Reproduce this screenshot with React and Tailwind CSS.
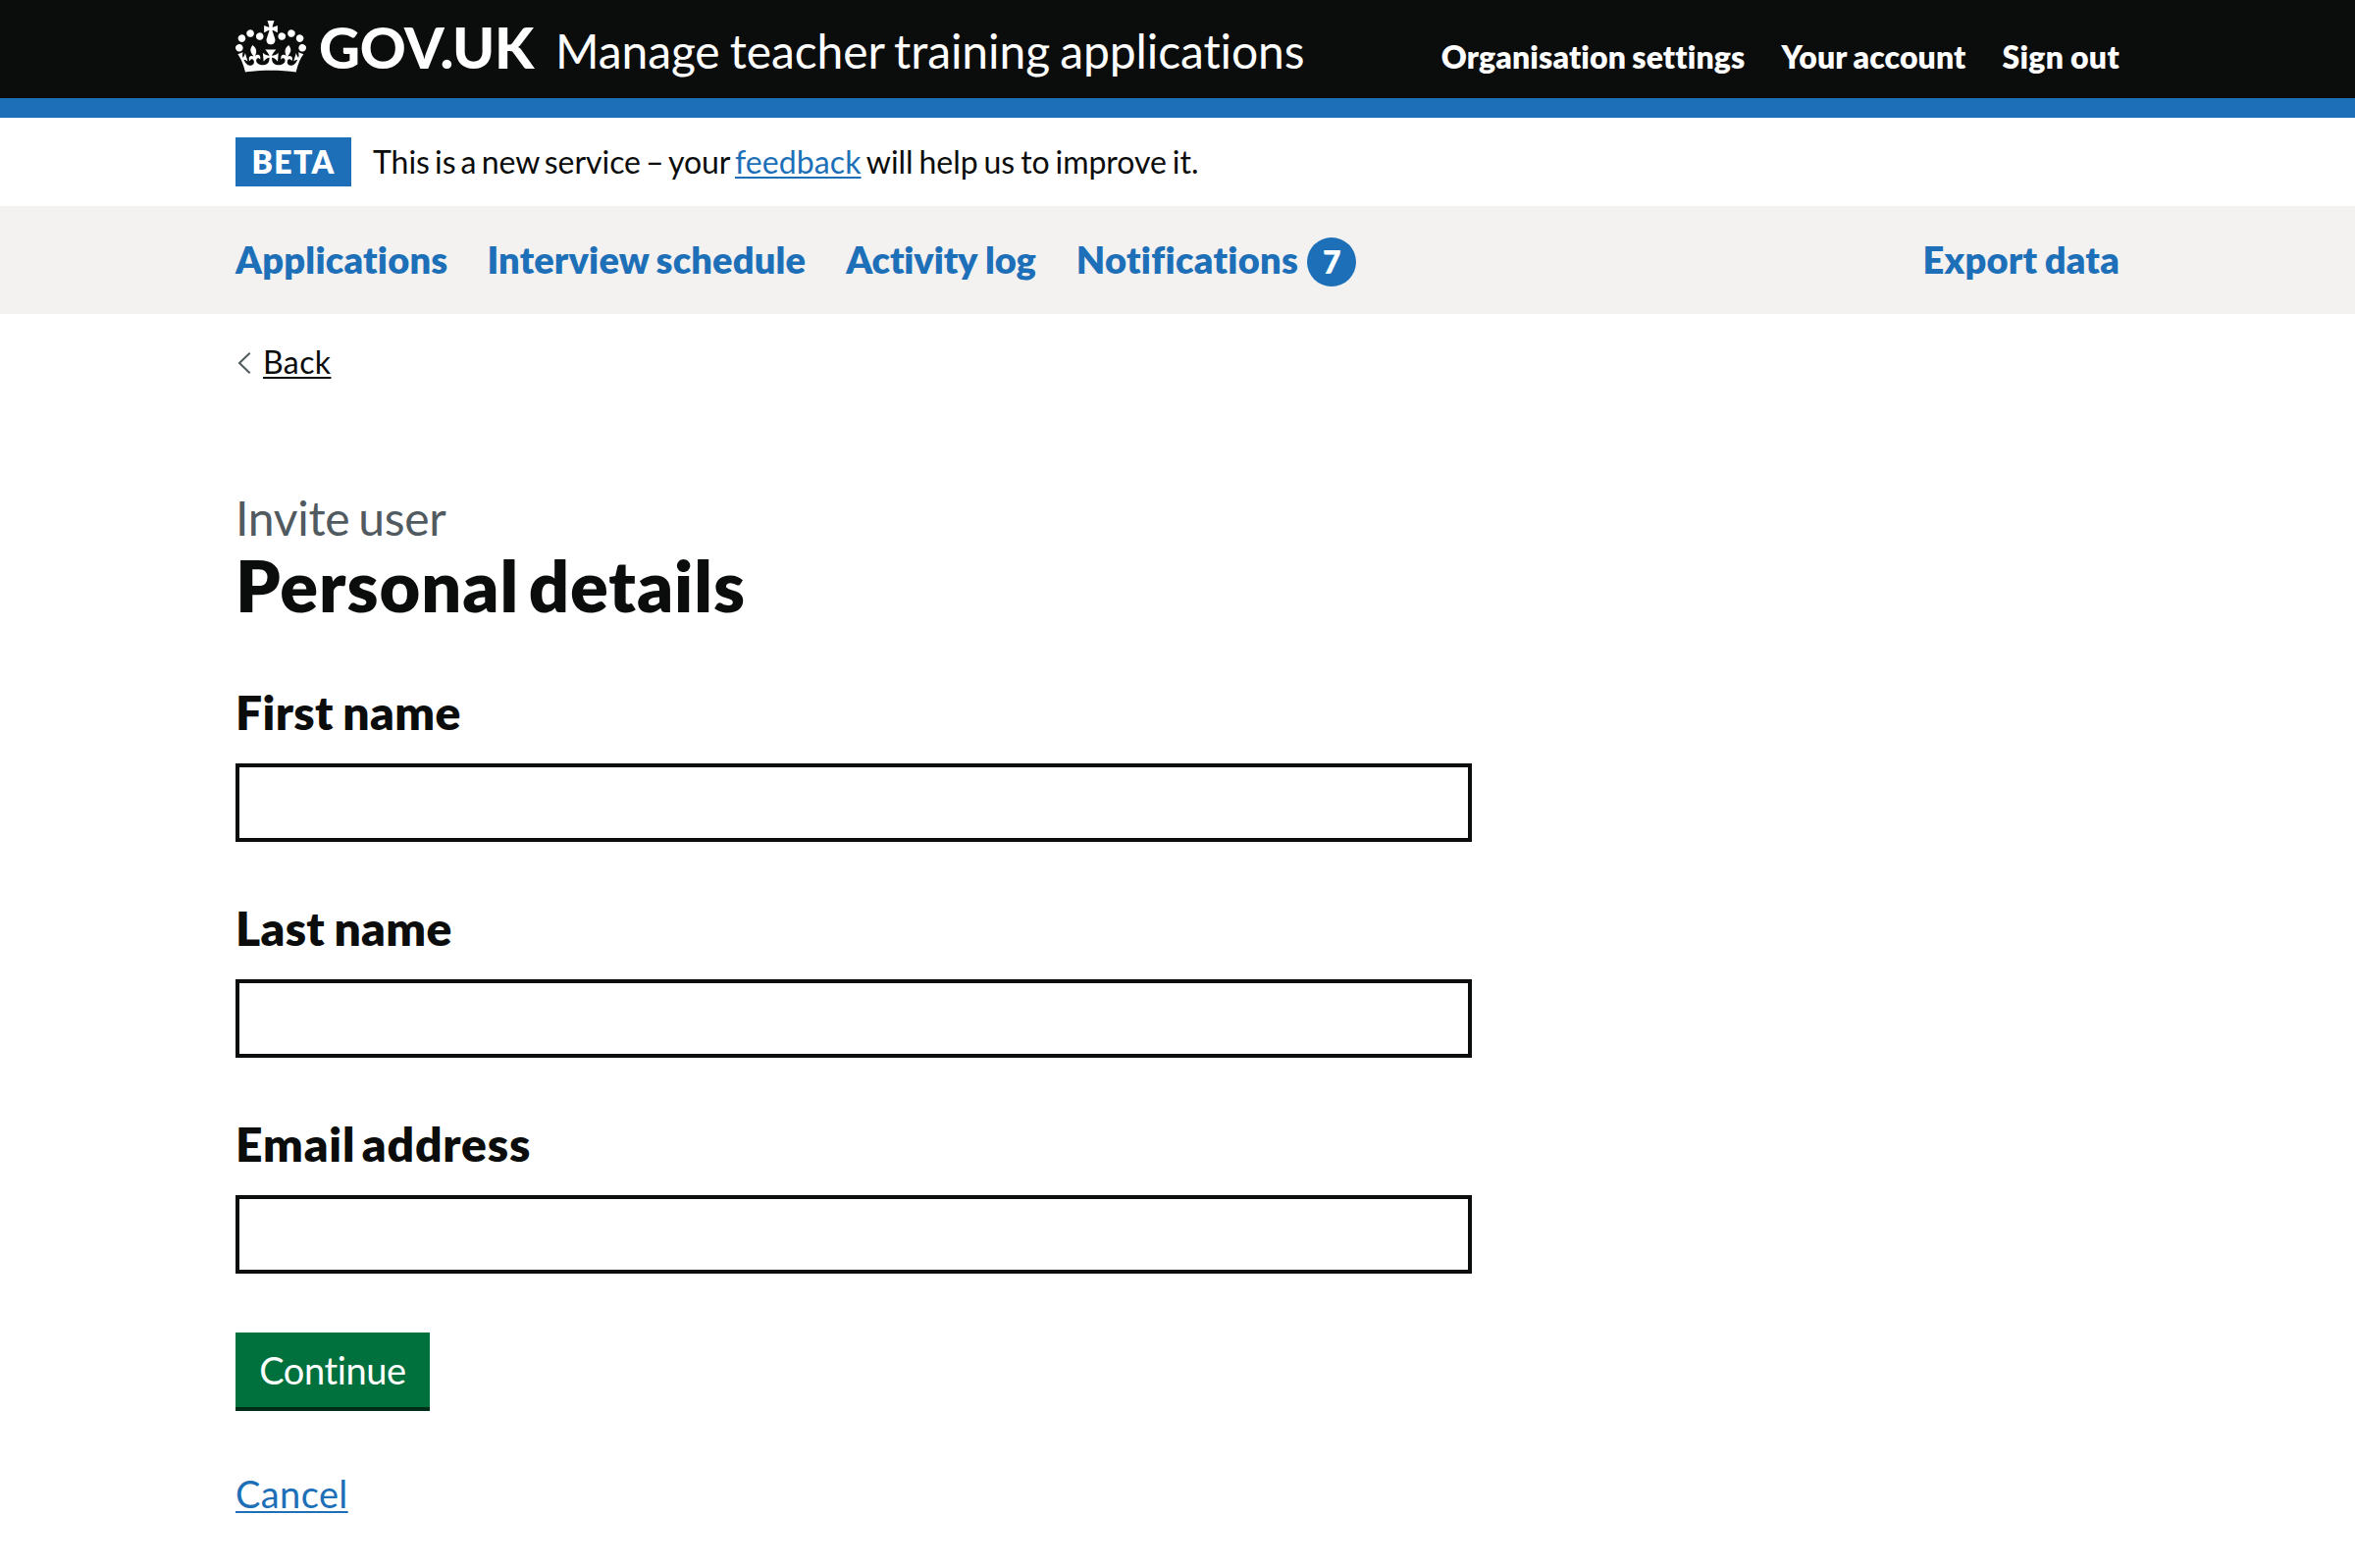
import React from "react";

function Crown() {
  return (
    <svg viewBox="0 0 132 97" className="mt-[21px] h-[53px] w-[72px] shrink-0 self-start" fill="currentColor" aria-hidden="true">
      <path
        fillRule="evenodd"
        d="M25 30.2c3.5 1.5 7.7-.2 9.1-3.7 1.5-3.6-.2-7.8-3.9-9.2-3.6-1.4-7.6.3-9.1 3.9-1.4 3.5.3 7.5 3.9 9zM9 39.5c3.6 1.5 7.8-.2 9.2-3.7 1.5-3.6-.2-7.8-3.9-9.1-3.6-1.5-7.6.2-9.1 3.8-1.4 3.5.3 7.5 3.8 9zM4.4 57.2c3.5 1.5 7.7-.2 9.1-3.8 1.5-3.6-.2-7.7-3.9-9.1-3.5-1.5-7.6.3-9.1 3.8-1.4 3.5.3 7.6 3.9 9.1zm38.3-21.4c3.5 1.5 7.7-.2 9.1-3.8 1.5-3.6-.2-7.7-3.9-9.1-3.6-1.5-7.6.3-9.1 3.8-1.3 3.6.4 7.7 3.9 9.1zm64.4-5.6c-3.6 1.5-7.8-.2-9.1-3.7-1.5-3.6.2-7.8 3.8-9.2 3.6-1.4 7.7.3 9.2 3.9 1.3 3.5-.4 7.5-3.9 9zm15.9 9.3c-3.6 1.5-7.7-.2-9.1-3.7-1.5-3.6.2-7.8 3.7-9.1 3.6-1.5 7.7.2 9.2 3.8 1.5 3.5-.3 7.5-3.8 9zm4.7 17.7c-3.6 1.5-7.8-.2-9.2-3.8-1.5-3.6.2-7.7 3.9-9.1 3.6-1.5 7.7.3 9.2 3.8 1.3 3.5-.4 7.6-3.9 9.1zM89.3 35.8c-3.6 1.5-7.8-.2-9.2-3.8-1.4-3.6.2-7.7 3.9-9.1 3.6-1.5 7.7.3 9.2 3.8 1.4 3.6-.3 7.7-3.9 9.1zM69.7 17.7l8.9 4.7V9.3l-8.9 2.8c-.2-.3-.5-.6-.9-.9L72.4 0H59.6l3.5 11.2c-.3.3-.6.5-.9.9l-8.8-2.8v13.1l8.8-4.7c.3.3.6.7.9.9l-5 15.4v.1c-.2.8-.4 1.6-.4 2.4 0 4.1 3.1 7.5 7 8.1h.2c.3 0 .7.1 1 .1.4 0 .7 0 1-.1h.2c4-.6 7.1-4.1 7.1-8.1 0-.8-.1-1.7-.4-2.4V34l-5.1-15.4c.4-.2.7-.6 1-.9zM66 92.8c16.9 0 32.8 1.1 47.1 3.2 4-16.9 8.9-26.7 14-33.5l-9.6-3.4c1 4.9 1.1 7.2 0 10.2-1.5-1.4-3-4.3-4.2-8.7L108.6 76c2.8-2 5-3.2 7.5-3.3-4.4 9.4-10 11.9-13.6 11.2-4.3-.8-6.3-4.6-5.6-7.9 1-4.7 5.7-5.9 8-.5 4.3-8.7-3-11.4-7.6-8.8 7.1-7.2 7.9-13.5 2.1-21.1-8 6.1-8.1 12.3-4.5 20.8-4.7-5.4-12.1-2.5-9.5 6.2 3.4-5.2 7.9-2 7.2 3.1-.6 4.3-6.4 7.8-13.5 7.2-10.3-.9-10.9-8-11.2-13.8 2.5-.5 7.1 1.8 11 7.3L80.2 60c-4.1 4.4-8 5.3-12.3 5.4 1.4-4.4 8-11.6 8-11.6H55.5s6.4 7.2 7.9 11.6c-4.2-.1-8-1-12.3-5.4l1.4 16.4c3.9-5.5 8.5-7.7 10.9-7.3-.3 5.8-.9 12.8-11.1 13.8-7.2.6-12.9-2.9-13.5-7.2-.7-5 3.8-8.3 7.1-3.1 2.7-8.7-4.6-11.6-9.4-6.2 3.7-8.5 3.6-14.7-4.6-20.8-5.8 7.6-5 13.9 2.2 21.1-4.7-2.6-11.9.1-7.7 8.8 2.3-5.5 7.1-4.2 8.1.5.7 3.3-1.3 7.1-5.7 7.9-3.5.7-9-1.8-13.5-11.2 2.5.1 4.7 1.3 7.5 3.3l-4.7-15.4c-1.2 4.4-2.7 7.2-4.3 8.7-1.1-3-.9-5.3 0-10.2l-9.5 3.4c5 6.9 9.9 16.7 14 33.5 14.8-2.1 30.8-3.2 47.7-3.2z"
      />
    </svg>
  );
}

function Field({ id, label, labelClass }) {
  return (
    <div className="flex flex-col gap-[22px]">
      <label htmlFor={id} className={`text-[48px] leading-[60px] font-extrabold ${labelClass}`}>
        {label}
      </label>
      <input id={id} type="text" className="block h-20 w-[1260px] border-4 border-[#0b0c0c] bg-white px-2 text-[38px] outline-none" />
    </div>
  );
}

export default function App() {
  return (
    <div className="min-h-[1598px] bg-white font-['Lato','Liberation_Sans',sans-serif] whitespace-nowrap text-[#0b0c0c] [font-variant-ligatures:none]">
      <header className="h-[120px] border-b-[20px] border-[#1d70b8] bg-[#0b0c0c] text-white">
        <div className="mx-auto flex h-full w-[1920px] items-baseline">
          <Crown />
          <a href="#" className="ml-[13px] pt-[18px] text-[58px] leading-[60px] font-black tracking-[-0.3px]">GOV.UK</a>
          <a href="#" className="ml-[22px] pt-[22px] text-[48px] leading-[60px] tracking-[-0.1px] [word-spacing:-2px]">
            Manage teacher training applications
          </a>
          <nav className="ml-auto flex gap-[37px] text-[32px] leading-10 font-extrabold">
            <a href="#" className="tracking-[0.15px] [word-spacing:-1.5px]">Organisation settings</a>
            <a href="#" className="tracking-[0.1px] [word-spacing:-1px]">Your account</a>
            <a href="#" className="tracking-[0.3px] [word-spacing:-1px]">Sign out</a>
          </nav>
        </div>
      </header>

      <div className="mx-auto flex h-[90px] w-[1920px] items-center">
        <strong className="flex h-[50px] w-[118px] items-center justify-center bg-[#1d70b8] text-[32px] leading-10 font-extrabold tracking-[1.3px] text-white">
          BETA
        </strong>
        <p className="ml-[22px] text-[32px] leading-10 tracking-[-0.04px] [word-spacing:-3px]">
          This is a new service – your{" "}
          <a href="#" className="tracking-[0.1px] text-[#1d70b8] underline decoration-2 underline-offset-[3px]">feedback</a>
          <span className="[word-spacing:-2.2px]"> will help us to improve it.</span>
        </p>
      </div>

      <nav className="h-[110px] bg-[#f3f2f1] text-[38px] leading-[50px] font-extrabold text-[#1d70b8]">
        <div className="mx-auto flex h-full w-[1920px] items-center gap-10">
          <a href="#" className="mb-0.5 tracking-[0.2px]">Applications</a>
          <a href="#" className="mb-0.5 tracking-[0.15px] [word-spacing:-1.5px]">Interview schedule</a>
          <a href="#" className="mb-0.5 ml-px tracking-[-0.15px]">Activity log</a>
          <a href="#" className="ml-px flex items-center gap-[9px]">
            <span className="mb-0.5 tracking-[0.3px]">Notifications</span>
            <span className="mt-1 flex size-[50px] items-center justify-center rounded-full bg-[#1d70b8] text-[32px] text-white">7</span>
          </a>
          <a href="#" className="mb-0.5 ml-auto tracking-[0.2px] [word-spacing:-1.5px]">Export data</a>
        </div>
      </nav>

      <main className="mx-auto flex w-[1920px] flex-col items-start pt-[29px]">
        <a href="#" className="flex items-center text-[32px] leading-10">
          <svg viewBox="0 0 14 22" className="mt-px mr-3 ml-0.5 h-[22px] w-3.5" fill="none" stroke="#505a5f" strokeWidth="2" aria-hidden="true">
            <path d="M12.7.8 2 11l10.7 10.2" />
          </svg>
          <span className="tracking-[0.4px] underline decoration-2 underline-offset-[3px]">Back</span>
        </a>

        <h1 className="mt-[109px] flex flex-col">
          <span className="text-[48px] leading-[60px] tracking-[-0.3px] text-[#505a5f] [word-spacing:-3px]">Invite user</span>
          <span className="-mt-0.5 text-[72px] leading-[80px] font-extrabold tracking-[0.95px] [word-spacing:-8px]">Personal details</span>
        </h1>

        <form className="mt-[60px] flex flex-col items-start" onSubmit={(e) => e.preventDefault()}>
          <div className="flex flex-col gap-[58px]">
            <Field id="first-name" label="First name" labelClass="tracking-[0.35px] [word-spacing:-2px]" />
            <Field id="last-name" label="Last name" labelClass="tracking-[0.3px] [word-spacing:-2px]" />
            <Field id="email" label="Email address" labelClass="tracking-[0.85px] [word-spacing:-5.5px]" />
          </div>
          <button type="submit" className="mt-[60px] h-20 w-[198px] border-b-4 border-[#002d18] bg-[#00703c] text-[38px] leading-[50px] tracking-[-0.4px] text-white">
            Continue
          </button>
        </form>

        <a href="#" className="mt-[59px] text-[38px] leading-[50px] tracking-[0.4px] text-[#1d70b8] underline decoration-2 underline-offset-[3px]">
          Cancel
        </a>
      </main>
    </div>
  );
}
